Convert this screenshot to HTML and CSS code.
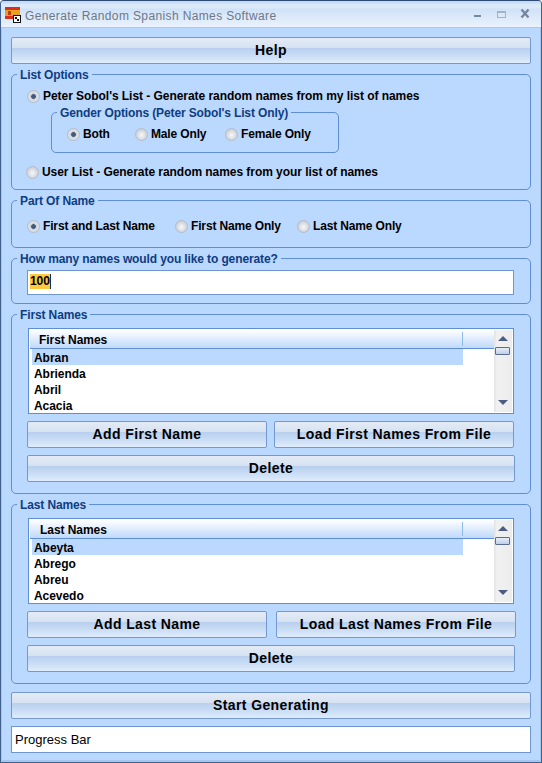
FILE: index.html
```html
<!DOCTYPE html>
<html lang="en">
<head>
<meta charset="utf-8">
<title>Generate Random Spanish Names Software</title>
<link rel="stylesheet" href="styles.css">
</head>
<body>
<div class="window">
  <header class="titlebar">
    <span class="appicon">
      <svg width="18" height="18" viewBox="0 0 18 18">
        <rect x="0" y="1" width="15" height="12" fill="#e8a020"/>
        <rect x="0" y="1" width="15" height="3" fill="#d8301c"/>
        <rect x="0" y="10" width="15" height="3" fill="#d8301c"/>
        <rect x="3" y="5" width="3" height="4" fill="#c03a18"/>
        <rect x="8.500" y="9.500" width="7" height="7" fill="#fff" stroke="#111" stroke-width="1"/>
        <rect x="10" y="11" width="2" height="2" fill="#111"/>
        <rect x="12" y="13" width="2" height="2" fill="#111"/>
      </svg>
    </span>
    <span class="title">Generate Random Spanish Names Software</span>
    <span class="controls">
      <svg width="68" height="14" viewBox="0 0 68 14">
        <rect x="4" y="8" width="7" height="2" fill="#7488a4"/>
        <rect x="27.500" y="4.500" width="8" height="6" fill="#dce8f6" stroke="#a2b2c8"/>
        <rect x="27" y="4" width="9" height="2" fill="#a2b2c8"/>
        <path d="M51.500 2.500l7 8M58.500 2.500l-7 8" stroke="#74849c" stroke-width="2.200" fill="none"/>
      </svg>
    </span>
  </header>
  <main class="content">
    <button class="btn">Help</button>

    <section class="group group-list">
      <span class="legend">List Options</span>
      <label class="opt opt-peter"><span class="radio on"></span>Peter Sobol's List - Generate random names from my list of names</label>
      <div class="group inner">
        <span class="legend">Gender Options (Peter Sobol's List Only)</span>
        <div class="optrow gender">
          <label class="opt w-both"><span class="radio on"></span>Both</label>
          <label class="opt w-male"><span class="radio"></span>Male Only</label>
          <label class="opt"><span class="radio"></span>Female Only</label>
        </div>
      </div>
      <label class="opt opt-user"><span class="radio"></span>User List - Generate random names from your list of names</label>
    </section>

    <section class="group group-part">
      <span class="legend">Part Of Name</span>
      <div class="optrow">
        <label class="opt w-first"><span class="radio on"></span>First and Last Name</label>
        <label class="opt w-firsto"><span class="radio"></span>First Name Only</label>
        <label class="opt"><span class="radio"></span>Last Name Only</label>
      </div>
    </section>

    <section class="group group-count">
      <span class="legend">How many names would you like to generate?</span>
      <div class="field"><span class="sel">100</span><span class="caret"></span></div>
    </section>

    <section class="group group-names">
      <span class="legend">First Names</span>
      <div class="list">
        <div class="listmain">
          <div class="listhead"><span class="headcell">First Names</span></div>
          <div class="row selected"><span>Abran</span></div>
          <div class="row">Abrienda</div>
          <div class="row">Abril</div>
          <div class="row">Acacia</div>
        </div>
        <div class="scroll"><span class="up"></span><span class="thumb"></span><span class="down"></span></div>
      </div>
      <div class="btnrow first">
        <button class="btn">Add First Name</button>
        <button class="btn">Load First Names From File</button>
      </div>
      <button class="btn del">Delete</button>
    </section>

    <section class="group group-names">
      <span class="legend">Last Names</span>
      <div class="list">
        <div class="listmain">
          <div class="listhead"><span class="headcell lastcell">Last Names</span></div>
          <div class="row selected"><span>Abeyta</span></div>
          <div class="row">Abrego</div>
          <div class="row">Abreu</div>
          <div class="row">Acevedo</div>
        </div>
        <div class="scroll"><span class="up"></span><span class="thumb"></span><span class="down"></span></div>
      </div>
      <div class="btnrow last">
        <button class="btn">Add Last Name</button>
        <button class="btn">Load Last Names From File</button>
      </div>
      <button class="btn del">Delete</button>
    </section>

    <button class="btn start">Start Generating</button>
    <div class="progress">Progress Bar</div>
  </main>
</div>
</body>
</html>
```
FILE: styles.css
```css
* { box-sizing: border-box; }
html, body { margin: 0; padding: 0; }
body {
  width: 542px;
  height: 763px;
  overflow: hidden;
  font-family: "Liberation Sans", Arial, sans-serif;
  font-size: 12px;
  font-weight: 700;
  letter-spacing: -0.05px;
  color: #000;
}
.window {
  width: 542px;
  height: 763px;
  background: #bbd8fe;
  border: 1px solid #41618c;
  border-top-color: #2e4a70;
  border-radius: 4px 4px 0 0;
  box-shadow: inset 1px 0 0 #a7c6ee, inset -1px 0 0 #a7c6ee, inset 0 -2px 0 #a7c6ee;
}
.titlebar {
  height: 27px;
  display: flex;
  align-items: center;
  padding-left: 4px;
  background: linear-gradient(#c5dcf6 0, #c5dcf6 2px, #dbe9f9 3px, #dbe9f9 7px, #cfe2f8 8px, #eaf2fc 100%);
  border-bottom: 1px solid #a9caf0;
  border-radius: 3px 3px 0 0;
}
.appicon { width: 20px; height: 18px; display: block; margin-top: 2px; }
.title {
  font-weight: 400;
  font-size: 12px;
  letter-spacing: 0.37px;
  color: #6d7889;
  padding-top: 3px;
}
.controls { margin-left: auto; margin-right: 3px; height: 14px; }
.controls svg { display: block; }
.content {
  padding: 9px 10px 0;
  display: flex;
  flex-direction: column;
}
.btn {
  display: block;
  width: 100%;
  height: 27px;
  padding: 0 0 2px;
  border: 1px solid #7499d0;
  border-radius: 2px;
  background: linear-gradient(#e4ebf6 0, #d6e1f1 40%, #b9d0ee 42%, #c3d8f3 60%, #dfecfc 100%);
  font-family: inherit;
  font-weight: 700;
  font-size: 14px;
  letter-spacing: 0.38px;
  color: #000;
}
.group {
  position: relative;
  border: 1px solid #5f8fd2;
  border-radius: 5px;
  margin-top: 10px;
}
.legend {
  position: absolute;
  top: -7px;
  left: 5px;
  padding: 0 3px;
  height: 15px;
  line-height: 14px;
  background: #bbd8fe;
  color: #0d3d82;
  letter-spacing: -0.12px;
  white-space: nowrap;
}
.opt {
  display: flex;
  align-items: center;
  height: 16px;
  white-space: nowrap;
}
.radio {
  width: 13px;
  height: 13px;
  border-radius: 50%;
  margin-right: 3px;
  flex: none;
  border: 1px solid #b4bdc9;
  background: radial-gradient(circle at 50% 55%, #f8f8f8 0, #dcdfe4 45%, #b9bec6 100%);
}
.radio.on {
  background: radial-gradient(circle, #44587a 0, #44587a 26%, #c8d0da 34%, #dfe3e9 60%, #b6bcc6 100%);
}
.optrow { display: flex; letter-spacing: -0.15px; }
.group-list { height: 116px; padding: 13px 0 0 15px; }
.opt-user { margin: 11px 0 0 -1px; }
.inner {
  height: 41px;
  width: 288px;
  margin: 8px 0 0 24px;
  padding: 13px 0 0 15px;
}
.w-both { width: 68px; }
.w-male { width: 90px; }
.group-part { height: 48px; padding: 17px 0 0 15px; }
.w-first { width: 148px; }
.w-firsto { width: 122px; }
.group-count { height: 46px; padding: 11px 0 0 15px; }
.field {
  width: 487px;
  height: 25px;
  background: #fff;
  border: 1px solid #6f96cf;
  display: flex;
  align-items: center;
  padding: 0 0 2px 2px;
}
.sel { background: #fdc93f; height: 15px; line-height: 15px; }
.caret { width: 1px; height: 15px; background: #0d2f66; }
.group-names { height: 180px; padding: 13px 0 0 15px; }
.list {
  margin-left: 1px;
  width: 486px;
  height: 86px;
  border: 1px solid #5f8fd2;
  background: #fff;
  display: flex;
  padding: 1px;
}
.listmain { flex: 1; min-width: 0; overflow: hidden; }
.listhead {
  height: 19px;
  background: linear-gradient(#fff, #bfd9fb);
  border-bottom: 1px solid #5f8fd2;
  padding-left: 9px;
  line-height: 20px;
  position: relative;
}
.listhead::after {
  content: "";
  position: absolute;
  top: 2px;
  bottom: 2px;
  left: 432px;
  width: 1px;
  background: #8fbaf0;
}
.lastcell { margin-left: 1px; }
.row { height: 16px; line-height: 18px; padding-left: 4px; }
.row.selected { background: #bbd8fe; width: 431px; margin-left: 2px; padding-left: 2px; }
.scroll {
  width: 18px;
  flex: none;
  background: linear-gradient(90deg, #e2e2e2, #f1f1f1 3px, #ececec);
  display: flex;
  flex-direction: column;
  align-items: center;
  position: relative;
}
.up, .down {
  width: 0;
  height: 0;
  border-left: 5px solid transparent;
  border-right: 5px solid transparent;
}
.up { border-bottom: 5px solid #4c5d83; margin-top: 6px; }
.down { border-top: 5px solid #4c5d83; margin-top: auto; margin-bottom: 7px; }
.thumb {
  position: absolute;
  top: 17px;
  left: 1px;
  width: 15px;
  height: 8px;
  border: 1px solid #5d6d90;
  border-radius: 1px;
  background: linear-gradient(#e6eef8, #bcd0ea);
}
.btnrow { display: grid; margin-top: 7px; }
.btnrow.first { grid-template-columns: 240px 240px; column-gap: 7px; }
.btnrow.last { grid-template-columns: 240px 240px; column-gap: 9px; }
.del { width: 488px; margin-top: 7px; }
.start { margin-top: 8px; }
.progress {
  margin-top: 7px;
  height: 27px;
  background: #fff;
  border: 1px solid #6f96cf;
  padding-left: 3px;
  line-height: 25px;
  font-weight: 400;
  font-size: 13px;
  letter-spacing: 0;
}
```
